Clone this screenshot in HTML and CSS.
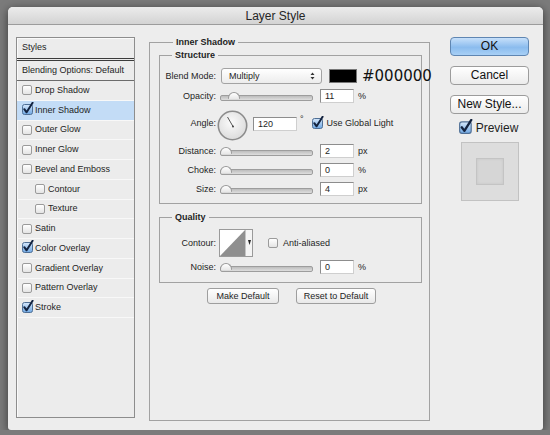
FILE: index.html
```html
<!DOCTYPE html>
<html>
  <head>
    <title>Layer Style</title>
    <link rel="stylesheet" href="styles.css">
  </head>
  <body>
    <svg class="defs" width="0" height="0">
      <defs>
        <linearGradient id="blueFill" x1="0" y1="0" x2="0" y2="1">
          <stop offset="0" stop-color="#d6e8fb"/>
          <stop offset="1" stop-color="#6ea6e2"/>
        </linearGradient>
        <symbol id="checked" viewBox="0 0 12 13">
          <rect x="0.5" y="2.5" width="10" height="10" rx="2" fill="url(#blueFill)" stroke="#4f6f95"/>
          <path d="M2.3 7.2 L4.6 10.3 L10.6 0.8" fill="none" stroke="#13233f" stroke-width="2" stroke-linecap="round" stroke-linejoin="round"/>
        </symbol>
      </defs>
    </svg>

    <div class="window">
      <div class="titlebar">Layer Style</div>
      <div class="content">

        <div class="styles-list">
          <div class="list-head">Styles</div>
          <div class="list-blend">Blending Options: Default</div>
          <div class="row"><span class="cb"></span>Drop Shadow</div>
          <div class="row selected"><svg class="cb-on"><use href="#checked"/></svg>Inner Shadow</div>
          <div class="row"><span class="cb"></span>Outer Glow</div>
          <div class="row"><span class="cb"></span>Inner Glow</div>
          <div class="row"><span class="cb"></span>Bevel and Emboss</div>
          <div class="row sub"><span class="cb"></span>Contour</div>
          <div class="row sub"><span class="cb"></span>Texture</div>
          <div class="row"><span class="cb"></span>Satin</div>
          <div class="row"><svg class="cb-on"><use href="#checked"/></svg>Color Overlay</div>
          <div class="row"><span class="cb"></span>Gradient Overlay</div>
          <div class="row"><span class="cb"></span>Pattern Overlay</div>
          <div class="row"><svg class="cb-on"><use href="#checked"/></svg>Stroke</div>
        </div>

        <fieldset class="panel">
          <legend class="panel-title">Inner Shadow</legend>

          <fieldset class="group structure">
            <legend>Structure</legend>

            <div class="line blend">
              <label>Blend Mode:</label>
              <div class="select">
                <span>Multiply</span>
                <svg class="arrows" width="5" height="8" viewBox="0 0 5 8">
                  <path d="M0.5 3 L2.5 0.5 L4.5 3 Z M0.5 5 L2.5 7.5 L4.5 5 Z" fill="#333"/>
                </svg>
              </div>
              <span class="swatch"></span>
              <span class="hex">#000000</span>
            </div>

            <div class="line">
              <label>Opacity:</label>
              <div class="slider"><span class="thumb" style="left: 8px"></span></div>
              <span class="field">11</span>
              <span class="unit">%</span>
            </div>

            <div class="line angle">
              <label>Angle:</label>
              <svg class="dial" width="31" height="31" viewBox="0 0 31 31">
                <defs>
                  <radialGradient id="dialFill" cx="0.45" cy="0.4" r="0.6">
                    <stop offset="0" stop-color="#fbfbfb"/>
                    <stop offset="1" stop-color="#dcdcdc"/>
                  </radialGradient>
                </defs>
                <circle cx="15.5" cy="15.5" r="14.2" fill="url(#dialFill)" stroke="#8c8c8c" stroke-width="1.6"/>
                <line x1="16" y1="16.5" x2="10.5" y2="7" stroke="#555" stroke-width="1"/>
                <circle cx="16" cy="16.5" r="1" fill="#444"/>
              </svg>
              <span class="field wide">120</span>
              <span class="unit deg">°</span>
              <svg class="cb-on global"><use href="#checked"/></svg>
              <span class="check-label">Use Global Light</span>
            </div>

            <div class="line">
              <label>Distance:</label>
              <div class="slider"><span class="thumb" style="left: 0px"></span></div>
              <span class="field">2</span>
              <span class="unit">px</span>
            </div>

            <div class="line">
              <label>Choke:</label>
              <div class="slider"><span class="thumb" style="left: 0px"></span></div>
              <span class="field">0</span>
              <span class="unit">%</span>
            </div>

            <div class="line">
              <label>Size:</label>
              <div class="slider"><span class="thumb" style="left: 0px"></span></div>
              <span class="field">4</span>
              <span class="unit">px</span>
            </div>
          </fieldset>

          <fieldset class="group quality">
            <legend>Quality</legend>

            <div class="line contour-line">
              <label>Contour:</label>
              <div class="contour">
                <svg width="25" height="26" viewBox="0 0 25 26">
                  <polygon points="0,26 25,0 25,26" fill="#8f8f8f"/>
                </svg>
                <span class="contour-drop">
                  <svg width="3" height="6" viewBox="0 0 3 6"><path d="M0 0 H3 L1.5 5 Z" fill="#222"/></svg>
                </span>
              </div>
              <span class="cb aa"></span>
              <span class="check-label">Anti-aliased</span>
            </div>

            <div class="line noise">
              <label>Noise:</label>
              <div class="slider"><span class="thumb" style="left: 0px"></span></div>
              <span class="field">0</span>
              <span class="unit">%</span>
            </div>
          </fieldset>

          <div class="defaults">
            <span class="small-btn make">Make Default</span>
            <span class="small-btn reset">Reset to Default</span>
          </div>
        </fieldset>

        <div class="side">
          <div class="btn ok">OK</div>
          <div class="btn">Cancel</div>
          <div class="btn">New Style...</div>
          <div class="preview-check"><svg class="cb-big"><use href="#checked"/></svg>Preview</div>
          <div class="preview">
            <div class="preview-square"></div>
          </div>
        </div>

      </div>
    </div>
  </body>
</html>
```

FILE: styles.css
```css
* {
    margin: 0;
    padding: 0;
    box-sizing: border-box;
}
body {
    background: #7b7b7b;
    font: 9px/11px "Liberation Sans", Arial, sans-serif;
    color: #1e1e1e;
    overflow: hidden;
}
.defs {
    position: absolute;
}
.window {
    margin: 7px 0 0 8px;
    width: 535px;
    height: 423px;
    background: #ededed;
    border-radius: 5px 5px 3px 3px;
    box-shadow: 0 2px 10px rgba(0, 0, 0, .55);
}
.titlebar {
    height: 18px;
    line-height: 18px;
    text-align: center;
    font-size: 12px;
    color: #262626;
    border-radius: 5px 5px 0 0;
    background: linear-gradient(#ececec, #d3d3d3);
    border-bottom: 1px solid #9c9c9c;
}
.content {
    display: flex;
    align-items: flex-start;
    padding: 12px 0 0 8px;
}

/* left list */
.styles-list {
    flex: none;
    width: 119px;
    height: 381px;
    border: 1px solid #8d8d8d;
    background: #ececec;
    box-shadow: inset 1px 1px 0 #fafafa;
}
.list-head {
    height: 23px;
    line-height: 19px;
    padding-left: 5px;
    border-bottom: 3px double #3c3c3c;
}
.list-blend {
    height: 20px;
    line-height: 19px;
    padding-left: 5px;
    border-bottom: 1px solid #6c6c6c;
}
.row {
    display: flex;
    align-items: center;
    height: 19.75px;
    padding-left: 5px;
    border-bottom: 1px solid #f8f8f8;
}
.row.sub {
    padding-left: 18px;
}
.row.selected {
    background: #c3dcf6;
}
.cb {
    display: inline-block;
    flex: none;
    width: 10px;
    height: 10px;
    margin-right: 3px;
    border: 1px solid #9b9b9b;
    border-radius: 2px;
    background: linear-gradient(#ffffff, #e4e4e4);
}
.cb-on {
    flex: none;
    width: 12px;
    height: 13px;
    margin: -3px 1px 0 0;
}

/* main panel */
fieldset {
    min-width: 0;
    border: 1px solid #a2a2a2;
}
legend {
    font-weight: bold;
    line-height: 11px;
    padding: 0 3px;
}
.panel {
    flex: none;
    width: 281px;
    height: 384px;
    margin-left: 14px;
    padding: 2px 7px 0 9px;
}
.panel-title {
    margin-left: 14px;
}
.group legend {
    margin-left: 12px;
}
.structure {
    padding: 7px 0 7px;
}
.quality {
    margin-top: 8px;
    padding: 6px 0 8px;
}
.line {
    display: flex;
    align-items: center;
    height: 14px;
    margin-top: 5px;
}
.line:first-of-type {
    margin-top: 0;
}
.line label {
    flex: none;
    width: 56px;
    text-align: right;
    margin-right: 4px;
}
.blend {
    height: 16px;
    margin-bottom: 2px;
}
.select {
    display: flex;
    align-items: center;
    justify-content: space-between;
    flex: none;
    width: 101px;
    height: 16px;
    margin-left: 1px;
    padding: 0 6px 0 7px;
    border: 1px solid #a3a3a3;
    border-radius: 3px;
    background: linear-gradient(#ffffff, #ececec);
}
.swatch {
    flex: none;
    width: 28px;
    height: 14px;
    margin-left: 7px;
    background: #000;
    border: 1px solid #777;
}
.hex {
    margin-left: 5px;
    font: 15px "DejaVu Sans", sans-serif;
    color: #111;
    white-space: nowrap;
}
.slider {
    position: relative;
    flex: none;
    width: 93px;
    height: 14px;
}
.slider::before {
    content: "";
    position: absolute;
    left: 0;
    right: 0;
    top: 6px;
    height: 4px;
    border-radius: 2px;
    border: 1px solid #9d9d9d;
    background: linear-gradient(#bdbdbd, #dedede);
}
.thumb {
    position: absolute;
    top: 3px;
    width: 12px;
    height: 7px;
    border: 1px solid #9a9a9a;
    border-bottom: none;
    border-radius: 6px 6px 1px 1px;
    background: linear-gradient(#ffffff, #e7e7e7);
}
.field {
    flex: none;
    width: 34px;
    height: 14px;
    margin-left: 7px;
    padding-left: 4px;
    line-height: 13px;
    background: #fff;
    border: 1px solid #8d8d8d;
    border-right-color: #cfcfcf;
    border-bottom-color: #cfcfcf;
}
.unit {
    margin-left: 4px;
}
.angle {
    height: 31px;
    margin-top: 5px;
}
.dial {
    flex: none;
    margin-left: -3px;
    position: relative;
    top: 2px;
}
.field.wide {
    width: 44px;
    margin-left: 5px;
}
.deg {
    align-self: flex-start;
    margin-top: 6px;
    margin-left: 3px;
}
.global {
    margin-left: 8px;
    margin-right: 3px;
}
.check-label {
    white-space: nowrap;
}
.contour-line {
    height: 28px;
}
.contour {
    display: flex;
    flex: none;
    width: 34px;
    height: 28px;
    margin-left: -1px;
    background: #fff;
    border: 1px solid #9a9a9a;
}
.contour-drop {
    display: flex;
    justify-content: center;
    padding-top: 10px;
    width: 7px;
    background: #f4f4f4;
    border-left: 1px solid #c4c4c4;
}
.cb.aa {
    margin-left: 15px;
    margin-right: 5px;
}
.line.noise {
    margin-top: 3px;
}
.defaults {
    display: flex;
    justify-content: center;
    gap: 17px;
    margin-top: 5px;
    padding-left: 2px;
}
.small-btn {
    height: 16px;
    line-height: 14px;
    text-align: center;
    border: 1px solid #9e9e9e;
    border-radius: 3px;
    background: linear-gradient(#ffffff, #e9e9e9);
}
.small-btn.make {
    width: 72px;
}
.small-btn.reset {
    width: 80px;
}

/* right column */
.side {
    flex: none;
    width: 79px;
    margin-left: 20px;
    display: flex;
    flex-direction: column;
    align-items: center;
}
.btn {
    width: 79px;
    height: 19px;
    margin-bottom: 10px;
    line-height: 17px;
    text-align: center;
    font-size: 12px;
    color: #111;
    border: 1px solid #9c9c9c;
    border-radius: 4px;
    background: linear-gradient(#ffffff, #ececec);
}
.btn.ok {
    border-color: #5f86b2;
    background: linear-gradient(#c7e0fa, #8bbcee 55%, #a8d0f6);
}
.preview-check {
    display: flex;
    align-items: center;
    font-size: 12px;
    margin: -2px 0 0 -2px;
}
.cb-big {
    width: 14px;
    height: 15px;
    margin: -3px 3px 0 0;
}
.preview {
    display: flex;
    align-items: center;
    justify-content: center;
    width: 58px;
    height: 59px;
    margin-top: 8px;
    background: #dddddd;
    border: 1px solid #c2c2c2;
}
.preview-square {
    width: 28px;
    height: 27px;
    background: #d6d6d6;
    border: 1px solid #c4c4c4;
    box-shadow: inset 0 0 3px rgba(0, 0, 0, .08);
}
```
